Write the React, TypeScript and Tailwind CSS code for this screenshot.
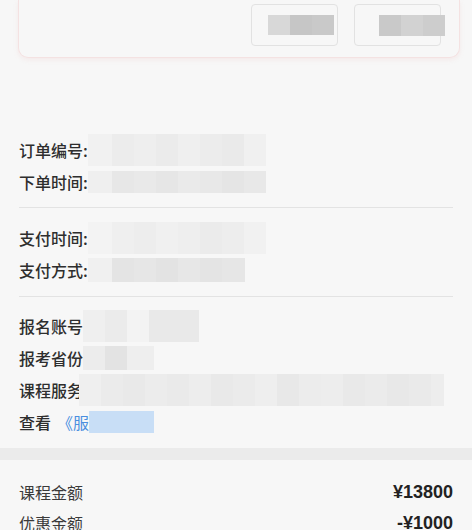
import React from "react";

type Cell = string;

function Cells({ cells, h }: { cells: Cell[]; h: string }) {
  return (
    <div className={`flex ${h}`}>
      {cells.map((c, i) => (
        <div key={i} className={`h-full ${c}`} />
      ))}
    </div>
  );
}

const row1: Cell[] = [
  "w-[24px] bg-[#f1f1f1]",
  "w-[22px] bg-[#ececec]",
  "w-[22px] bg-[#eeeeee]",
  "w-[22px] bg-[#ebebeb]",
  "w-[22px] bg-[#efefef]",
  "w-[22px] bg-[#ececec]",
  "w-[22px] bg-[#eaeaea]",
  "w-[22px] bg-[#f0f0f0]",
];
const row2: Cell[] = [
  "w-[24px] bg-[#efefef]",
  "w-[22px] bg-[#e7e7e7]",
  "w-[22px] bg-[#e9e9e9]",
  "w-[22px] bg-[#e6e6e6]",
  "w-[22px] bg-[#eaeaea]",
  "w-[22px] bg-[#e8e8e8]",
  "w-[22px] bg-[#e5e5e5]",
  "w-[22px] bg-[#e8e8e8]",
];
const row3: Cell[] = [
  "w-[24px] bg-[#f3f3f3]",
  "w-[22px] bg-[#efefef]",
  "w-[22px] bg-[#ededed]",
  "w-[22px] bg-[#f0f0f0]",
  "w-[22px] bg-[#eeeeee]",
  "w-[22px] bg-[#ebebeb]",
  "w-[22px] bg-[#ededed]",
  "w-[22px] bg-[#f1f1f1]",
];
const row4: Cell[] = [
  "w-[24px] bg-[#f0f0f0]",
  "w-[22px] bg-[#e4e4e4]",
  "w-[22px] bg-[#e6e6e6]",
  "w-[22px] bg-[#e3e3e3]",
  "w-[22px] bg-[#e7e7e7]",
  "w-[22px] bg-[#e4e4e4]",
  "w-[23px] bg-[#e6e6e6]",
];
const row5: Cell[] = [
  "w-[22px] bg-[#efefef]",
  "w-[22px] bg-[#ebebeb]",
  "w-[22px] bg-[#f3f3f3]",
  "w-[50px] bg-[#e9e9e9]",
];
const row6: Cell[] = [
  "w-[22px] bg-[#ececec]",
  "w-[22px] bg-[#e3e3e3]",
  "w-[27px] bg-[#eeeeee]",
];
const row7: Cell[] = [
  "w-[22px] bg-[#efefef]",
  "w-[22px] bg-[#ebebeb]",
  "w-[22px] bg-[#e9e9e9]",
  "w-[22px] bg-[#ececec]",
  "w-[22px] bg-[#eaeaea]",
  "w-[22px] bg-[#ededed]",
  "w-[22px] bg-[#e9e9e9]",
  "w-[22px] bg-[#ebebeb]",
  "w-[22px] bg-[#eeeeee]",
  "w-[22px] bg-[#e8e8e8]",
  "w-[22px] bg-[#ececec]",
  "w-[22px] bg-[#ededed]",
  "w-[22px] bg-[#e9e9e9]",
  "w-[22px] bg-[#ebebeb]",
  "w-[22px] bg-[#e8e8e8]",
  "w-[22px] bg-[#eaeaea]",
  "w-[13px] bg-[#ededed]",
];

function Row({ children }: { children: React.ReactNode }) {
  return <div className="flex h-[32px] items-center">{children}</div>;
}

export default function App() {
  return (
    <div
      className="min-h-[530px] w-[472px] overflow-hidden bg-[#f7f7f7] text-[#2e2e2e]"
      style={{ fontFamily: '"Noto Sans CJK SC", "Noto Sans", sans-serif' }}
    >
      {/* top card */}
      <div className="ml-[18px] mr-[12px] flex h-[58px] justify-end gap-[16px] rounded-b-[10px] border border-t-0 border-[#f4e2e2] pr-[18px] pt-[4px] shadow-[0_2px_4px_rgba(240,200,200,0.25)]">
        <div className="flex h-[42px] w-[87px] items-center justify-end rounded-[4px] border border-[#e2e2e2] pr-[3px]">
          <Cells h="h-[20px]" cells={["w-[22px] bg-[#d8d8d8]", "w-[22px] bg-[#c6c6c6]", "w-[22px] bg-[#c9c9c9]"]} />
        </div>
        <div className="flex h-[42px] w-[87px] items-center rounded-[4px] border border-[#e2e2e2] pl-[24px]">
          <Cells h="h-[21px]" cells={["w-[22px] bg-[#c9c9c9]", "w-[22px] bg-[#d2d2d2]", "w-[22px] bg-[#cdcdcd]"]} />
        </div>
      </div>

      {/* section 1 */}
      <div className="px-[19px] pt-[76px] text-[16px] leading-none">
        <Row>
          <span className="font-medium">订单编号:</span>
          <Cells h="h-[32px]" cells={row1} />
        </Row>
        <Row>
          <span className="font-medium">下单时间:</span>
          <Cells h="h-[22px]" cells={row2} />
        </Row>
        <div className="mt-[9px] h-px bg-[#e3e3e3]" />
        <div className="h-[14px]" />
        <Row>
          <span className="font-medium">支付时间:</span>
          <Cells h="h-[32px]" cells={row3} />
        </Row>
        <Row>
          <span className="font-medium">支付方式:</span>
          <Cells h="h-[24px]" cells={row4} />
        </Row>
        <div className="mt-[10px] h-px bg-[#e3e3e3]" />
        <div className="h-[13px]" />
        <Row>
          <span className="font-medium">报名账号</span>
          <Cells h="h-[32px]" cells={row5} />
        </Row>
        <Row>
          <span className="font-medium">报考省份</span>
          <Cells h="h-[24px]" cells={row6} />
        </Row>
        <Row>
          <span className="font-medium">课程服务</span>
          <div className="-ml-[4px]">
            <Cells h="h-[32px]" cells={row7} />
          </div>
        </Row>
        <Row>
          <span className="font-medium">查看</span>
          <span className="ml-[6px] text-[#4a8fe0]">《服</span>
          <div className="h-[22px] w-[65px] bg-[#c8def6]" />
        </Row>
      </div>

      {/* band */}
      <div className="mt-[10px] h-[12px] bg-[#ebebeb]" />

      {/* amounts */}
      <div className="px-[19px] pt-[16px] text-[16px] leading-none">
        <div className="flex h-[32px] items-center justify-between">
          <span className="text-[#3a3a3a]">课程金额</span>
          <span className="text-[18px] font-bold text-[#222]" style={{ fontFamily: '"Liberation Sans", sans-serif' }}>
            ¥13800
          </span>
        </div>
        <div className="flex h-[30px] items-center justify-between">
          <span className="text-[#3a3a3a]">优惠金额</span>
          <span className="text-[18px] font-bold text-[#222]" style={{ fontFamily: '"Liberation Sans", sans-serif' }}>
            -¥1000
          </span>
        </div>
      </div>
    </div>
  );
}
